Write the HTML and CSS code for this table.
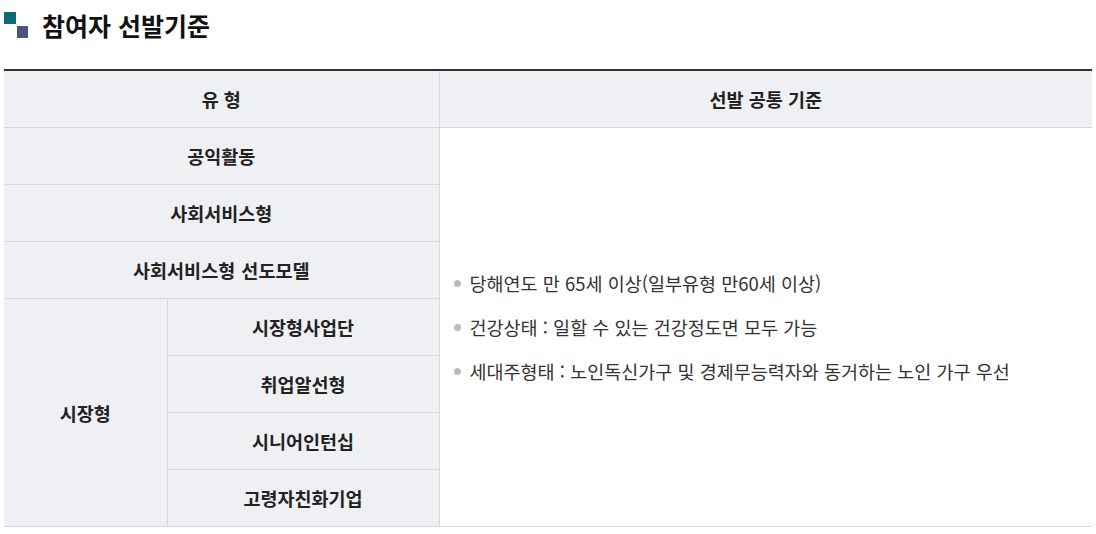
FILE: index.html
```html
<!DOCTYPE html>
<html lang="ko">
<head>
<meta charset="utf-8">
<link rel="stylesheet" href="styles.css">
</head>
<body>
<div class="page">
  <h2 class="title"><span class="title-icon"><span class="sq sq1"></span><span class="sq sq2"></span></span>참여자 선발기준</h2>
  <table class="tbl">
    <colgroup>
      <col class="c1"><col class="c2"><col class="c3">
    </colgroup>
    <thead>
      <tr><th colspan="2">유 형</th><th>선발 공통 기준</th></tr>
    </thead>
    <tbody>
      <tr><th colspan="2">공익활동</th>
        <td rowspan="7" class="criteria">
          <ul>
            <li>당해연도 만 65세 이상(일부유형 만60세 이상)</li>
            <li>건강상태 : 일할 수 있는 건강정도면 모두 가능</li>
            <li>세대주형태 : 노인독신가구 및 경제무능력자와 동거하는 노인 가구 우선</li>
          </ul>
        </td>
      </tr>
      <tr><th colspan="2">사회서비스형</th></tr>
      <tr><th colspan="2">사회서비스형 선도모델</th></tr>
      <tr><th rowspan="4" class="group">시장형</th><th>시장형사업단</th></tr>
      <tr><th>취업알선형</th></tr>
      <tr><th>시니어인턴십</th></tr>
      <tr><th>고령자친화기업</th></tr>
    </tbody>
  </table>
</div>
</body>
</html>
```
FILE: styles.css
```css
html, body {
  margin: 0;
  padding: 0;
  background: #fff;
}
body {
  font-family: "Noto Sans CJK KR", "Noto Sans", sans-serif;
  color: #222;
}
.page {
  padding: 0 4px;
  width: 1088px;
}
.title {
  display: flex;
  align-items: center;
  margin: 0;
  height: 50px;
  font-size: 25px;
  font-weight: 700;
  color: #111;
}
.title-icon {
  position: relative;
  width: 24px;
  height: 26px;
  margin-right: 14px;
  flex: none;
}
.sq {
  position: absolute;
  width: 12px;
  height: 12px;
}
.sq1 { left: 0; top: 0; background: #0f6a76; }
.sq2 { left: 13px; top: 14px; width: 11px; height: 12px; background: #4c5477; }

.tbl {
  margin-top: 19px;
  width: 1088px;
  border-collapse: collapse;
  table-layout: fixed;
  border-top: 2px solid #333;
  border-bottom: 1px solid #d5d5d8;
}
.c1 { width: 163px; }
.c2 { width: 272px; }
.c3 { width: auto; }
.tbl th, .tbl td {
  height: 56px;
  padding: 0;
  border: 1px solid #d9d9dc;
  border-top: 0;
  font-size: 18.5px;
}
.tbl tr > *:first-child { border-left: 0; }
.tbl tr > *:last-child { border-right: 0; }
.tbl thead th {
  height: 56px;
  background: #eff0f4;
  font-weight: 700;
  color: #222;
  border-bottom: 1px solid #d5d5d8;
}
.tbl tbody th {
  background: #eff0f4;
  font-weight: 700;
  color: #222;
  text-align: center;
  word-spacing: 1px;
}
.tbl tr > th.group { border-left: 0; }
.criteria {
  background: #fff;
  vertical-align: middle;
  border-right: 0;
}
.criteria ul {
  list-style: none;
  margin: 0;
  padding: 0 0 0 14px;
}
.criteria li {
  position: relative;
  padding-left: 16px;
  line-height: 44px;
  font-size: 18.5px;
  color: #333;
}
.criteria li::before {
  content: "";
  position: absolute;
  left: 0;
  top: 19px;
  width: 7px;
  height: 7px;
  border-radius: 50%;
  background: #bbb;
}
```
